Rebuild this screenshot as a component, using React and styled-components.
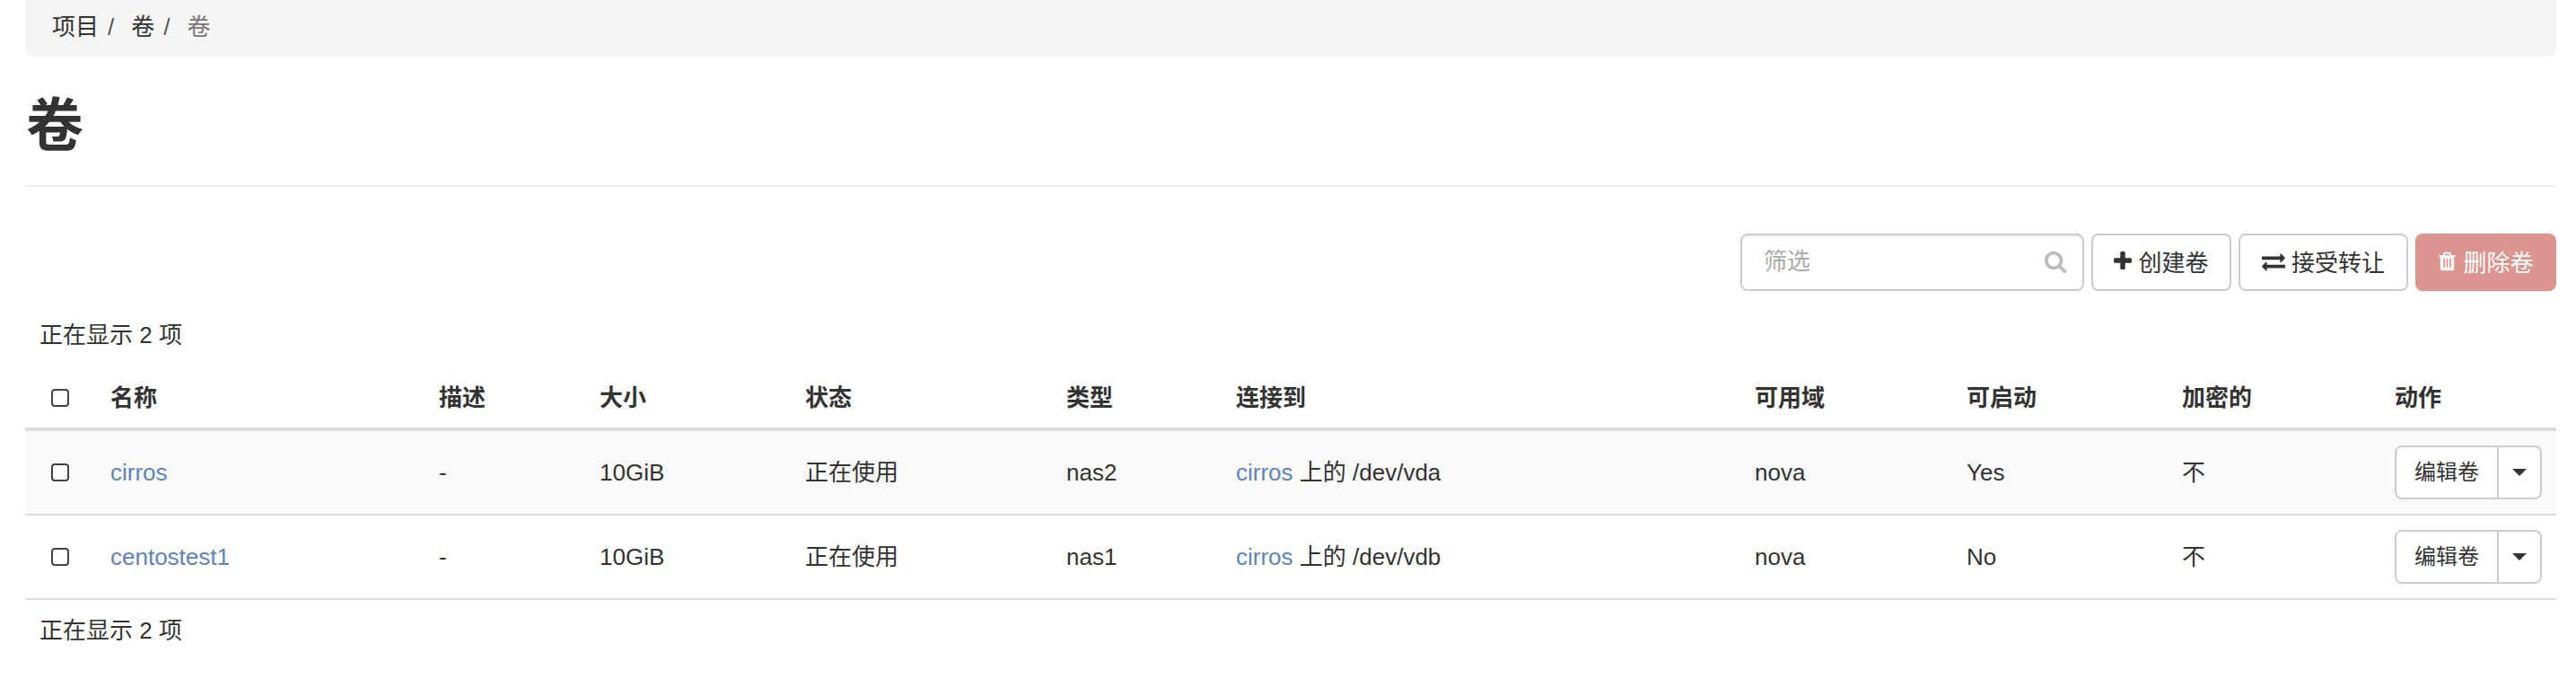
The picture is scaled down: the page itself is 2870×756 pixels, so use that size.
import React from "react";
import styled, { createGlobalStyle } from "styled-components";

const GlobalStyle = createGlobalStyle`
  html, body {
    margin: 0;
    padding: 0;
    background: #fff;
    color: #333;
    font-family: "Liberation Sans", "Noto Sans CJK SC", sans-serif;
    font-size: 26px;
  }
`;

const Page = styled.div`
  width: 2870px;
  height: 756px;
  padding: 0 22px 0 28px;
  box-sizing: border-box;
  overflow: hidden;
`;

const Breadcrumb = styled.ol`
  display: flex;
  align-items: center;
  height: 63px;
  margin: 0;
  padding: 0 30px 4px;
  box-sizing: border-box;
  list-style: none;
  background: #f5f5f5;
  border-radius: 0 0 8px 8px;
`;

const Crumb = styled.li`
  line-height: 36px;
  color: ${(p) => (p.$active ? "#777" : "#333")};
  &:not(:last-child)::after {
    content: "/";
    display: inline-block;
    color: #555;
    margin: 0 19px 0 10px;
    font-size: 26px;
  }
`;

const PageHeader = styled.div`
  height: 143px;
  border-bottom: 2px solid #eee;
`;

const Title = styled.h1`
  margin: 0;
  padding: 37px 0 0 1px;
  font-size: 64px;
  line-height: 80px;
  font-weight: 700;
  color: #333;
`;

const Toolbar = styled.div`
  display: flex;
  justify-content: flex-end;
  align-items: center;
  gap: 8px;
  margin-top: 52px;
`;

const FilterBox = styled.div`
  position: relative;
  width: 383px;
  height: 64px;
`;

const FilterInput = styled.input`
  width: 100%;
  height: 100%;
  box-sizing: border-box;
  padding: 0 60px 2px 24px;
  border: 2px solid #ccc;
  border-radius: 8px;
  box-shadow: inset 0 2px 2px rgba(0, 0, 0, 0.075);
  font: inherit;
  color: #333;
  outline: none;
  &::placeholder {
    color: #aaa;
    opacity: 1;
  }
`;

const FilterIcon = styled.span`
  position: absolute;
  top: 18px;
  right: 19px;
  display: flex;
  color: #bbb;
`;

const Button = styled.button`
  display: inline-flex;
  align-items: center;
  justify-content: center;
  gap: 7px;
  width: ${(p) => p.$w}px;
  height: 64px;
  padding: 0 0 3px;
  box-sizing: border-box;
  border: 2px solid ${(p) => (p.$danger ? "#dc948f" : "#ccc")};
  border-radius: 8px;
  background: ${(p) => (p.$danger ? "#dc948f" : "#fff")};
  color: ${(p) => (p.$danger ? "#fff" : "#333")};
  font: inherit;
`;

const Icon = styled.svg`
  display: block;
  flex: none;
  fill: currentColor;
`;

const Count = styled.div`
  height: 36px;
  line-height: 36px;
  padding-left: 16px;
  margin-top: ${(p) => p.$top}px;
`;

const Table = styled.table`
  width: 2820px;
  table-layout: fixed;
  border-collapse: separate;
  border-spacing: 0;
`;

const Col = styled.col`
  width: ${(p) => p.$w}px;
`;

const HeadCell = styled.th`
  height: 85px;
  box-sizing: content-box;
  padding: 0 0 0 16px;
  border-bottom: 4px solid #ddd;
  text-align: left;
  font-weight: 700;
  font-size: 26px;
  line-height: 36px;
`;

const HeadText = styled.div`
  padding-top: 18px;
`;

const Row = styled.tr`
  background: ${(p) => (p.$striped ? "#f9f9f9" : "#fff")};
`;

const Cell = styled.td`
  height: 92px;
  padding: 0 0 0 16px;
  border-bottom: 2px solid #ddd;
  line-height: 36px;
  white-space: nowrap;
`;

const Check = styled.input.attrs({ type: "checkbox" })`
  appearance: none;
  display: block;
  width: 20px;
  height: 20px;
  margin: 0 0 0 13px;
  border: 2px solid #444;
  border-radius: 4px;
  background: #fff;
`;

const Link = styled.a`
  color: #5b84bd;
  text-decoration: none;
`;

const SplitButton = styled.div`
  display: inline-flex;
  height: 60px;
  box-sizing: border-box;
  vertical-align: middle;
  background: #fff;
  border: 2px solid #ccc;
  border-radius: 8px;
`;

const SplitMain = styled.span`
  display: flex;
  align-items: center;
  justify-content: center;
  width: 112px;
  border-right: 2px solid #ccc;
  font-size: 24px;
`;

const SplitCaret = styled.span`
  display: flex;
  align-items: center;
  justify-content: center;
  width: 46px;
  &::after {
    content: "";
    border-top: 8px solid #333;
    border-left: 8px solid transparent;
    border-right: 8px solid transparent;
  }
`;

// font awesome 4 shapes, the packaged ones are the newer rounder drawings
const PlusIcon = () => (
  <Icon width="20" height="26" viewBox="192 0 1408 1792">
    <path d="M1600 736v192q0 40-28 68t-68 28h-416v416q0 40-28 68t-68 28h-192q-40 0-68-28t-28-68v-416h-416q-40 0-68-28t-28-68v-192q0-40 28-68t68-28h416v-416q0-40 28-68t68-28h192q40 0 68 28t28 68v416h416q40 0 68 28t28 68z" />
  </Icon>
);

const ExchangeIcon = () => (
  <Icon width="26" height="26" viewBox="0 0 1792 1792">
    <path d="M1792 1184v192q0 13-9.500 22.500t-22.500 9.500h-1376v192q0 13-9.500 22.500t-22.500 9.500q-12 0-24-10l-319-320q-9-9-9-22 0-14 9-23l320-320q9-9 23-9 13 0 22.500 9.500t9.500 22.500v192h1376q13 0 22.500 9.500t9.500 22.500zm0-544q0 14-9 23l-320 320q-9 9-23 9-13 0-22.500-9.500t-9.500-22.500v-192h-1376q-13 0-22.500-9.500t-9.500-22.500v-192q0-13 9.500-22.500t22.500-9.500h1376v-192q0-14 9-23t23-9q12 0 24 10l319 319q9 9 9 23z" />
  </Icon>
);

const TrashIcon = () => (
  <Icon width="21" height="24" viewBox="128 0 1536 1792">
    <path d="M704 1376v-704q0-14-9-23t-23-9h-64q-14 0-23 9t-9 23v704q0 14 9 23t23 9h64q14 0 23-9t9-23zm256 0v-704q0-14-9-23t-23-9h-64q-14 0-23 9t-9 23v704q0 14 9 23t23 9h64q14 0 23-9t9-23zm256 0v-704q0-14-9-23t-23-9h-64q-14 0-23 9t-9 23v704q0 14 9 23t23 9h64q14 0 23-9t9-23zm-544-992h448l-48-117q-7-9-17-11h-317q-10 2-17 11zm928 32v64q0 14-9 23t-23 9h-96v948q0 83-47 143.500t-113 60.500h-832q-66 0-113-58.500t-47-141.500v-952h-96q-14 0-23-9t-9-23v-64q0-14 9-23t23-9h309l70-167q15-37 54-63t79-26h320q40 0 79 26t54 63l70 167h309q14 0 23 9t9 23z" />
  </Icon>
);

const SearchIcon = () => (
  <Icon width="26" height="26" viewBox="0 0 1792 1792">
    <path d="M1216 832q0-185-131.500-316.500t-316.500-131.500-316.500 131.500-131.500 316.500 131.500 316.500 316.500 131.500 316.500-131.500 131.500-316.500zm512 832q0 52-38 90t-90 38q-54 0-90-38l-343-342q-179 124-399 124-143 0-273.500-55.500t-225-150-150-225-55.500-273.500 55.500-273.500 150-225 225-150 273.500-55.500 273.500 55.500 225 150 150 225 55.500 273.500q0 220-124 399l343 343q37 37 37 90z" />
  </Icon>
);

const columns = [
  { label: "名称", w: 366 },
  { label: "描述", w: 179 },
  { label: "大小", w: 229 },
  { label: "状态", w: 291 },
  { label: "类型", w: 189 },
  { label: "连接到", w: 578 },
  { label: "可用域", w: 236 },
  { label: "可启动", w: 240 },
  { label: "加密的", w: 237 },
  { label: "动作", w: 196 },
];

const volumes = [
  { name: "cirros", type: "nas2", dev: "/dev/vda", boot: "Yes" },
  { name: "centostest1", type: "nas1", dev: "/dev/vdb", boot: "No" },
];

export default function App() {
  return (
    <Page>
      <GlobalStyle />
      <Breadcrumb>
        <Crumb>项目</Crumb>
        <Crumb>卷</Crumb>
        <Crumb $active>卷</Crumb>
      </Breadcrumb>
      <PageHeader>
        <Title>卷</Title>
      </PageHeader>
      <Toolbar>
        <FilterBox>
          <FilterInput placeholder="筛选" />
          <FilterIcon>
            <SearchIcon />
          </FilterIcon>
        </FilterBox>
        <Button $w={156}>
          <PlusIcon />
          创建卷
        </Button>
        <Button $w={189}>
          <ExchangeIcon />
          接受转让
        </Button>
        <Button $w={157} $danger>
          <TrashIcon />
          删除卷
        </Button>
      </Toolbar>
      <Count $top={31}>正在显示 2 项</Count>
      <Table>
        <colgroup>
          <Col $w={79} />
          {columns.map((c) => (
            <Col key={c.label} $w={c.w} />
          ))}
        </colgroup>
        <thead>
          <tr>
            <HeadCell>
              <HeadText>
                <Check />
              </HeadText>
            </HeadCell>
            {columns.map((c) => (
              <HeadCell key={c.label}>
                <HeadText>{c.label}</HeadText>
              </HeadCell>
            ))}
          </tr>
        </thead>
        <tbody>
          {volumes.map((v, i) => (
            <Row key={v.name} $striped={i === 0}>
              <Cell>
                <Check />
              </Cell>
              <Cell>
                <Link>{v.name}</Link>
              </Cell>
              <Cell>-</Cell>
              <Cell>10GiB</Cell>
              <Cell>正在使用</Cell>
              <Cell>{v.type}</Cell>
              <Cell>
                <Link>cirros</Link> 上的 {v.dev}
              </Cell>
              <Cell>nova</Cell>
              <Cell>{v.boot}</Cell>
              <Cell>不</Cell>
              <Cell>
                <SplitButton>
                  <SplitMain>编辑卷</SplitMain>
                  <SplitCaret />
                </SplitButton>
              </Cell>
            </Row>
          ))}
        </tbody>
      </Table>
      <Count $top={16}>正在显示 2 项</Count>
    </Page>
  );
}
